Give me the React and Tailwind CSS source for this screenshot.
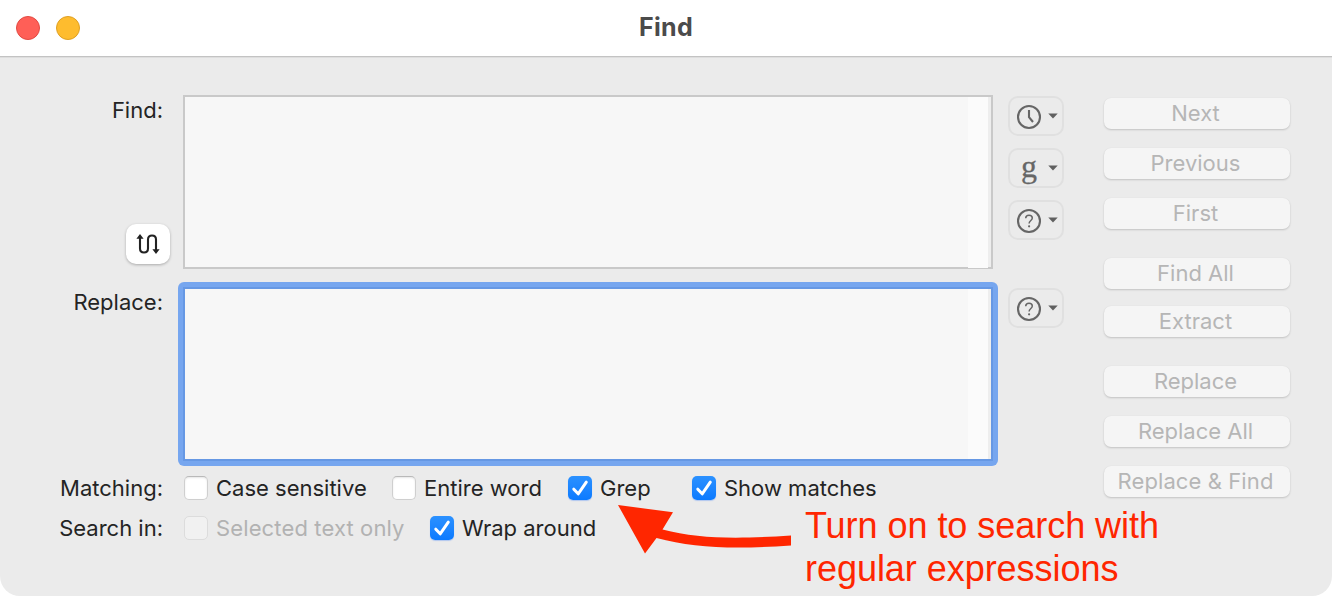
function Caret() {
  return (
    <svg width="10" height="6" viewBox="0 0 10 6" className="shrink-0">
      <path d="M0.3 0.4H9.7L5 5.6Z" fill="#606060" />
    </svg>
  );
}

function ClockIcon() {
  return (
    <svg width="26" height="26" viewBox="0 0 26 26" fill="none" stroke="#666" strokeWidth="2.1">
      <circle cx="13" cy="13" r="11" />
      <path d="M13 6V13.2L17 18" />
    </svg>
  );
}

function HelpIcon() {
  return (
    <svg width="26" height="26" viewBox="0 0 26 26" fill="none" stroke="#666" strokeWidth="2.1">
      <circle cx="13" cy="13" r="11" />
      <path d="M9.7 10.2C9.8 8.2 11.1 7.2 13 7.2C15 7.2 16.3 8.4 16.3 10C16.3 12.6 13.1 12.4 13.1 15.6" strokeWidth="1.5" />
      <circle cx="13.1" cy="18.3" r="1.1" fill="#666" stroke="none" />
    </svg>
  );
}

function Tool({ children, className = "" }) {
  return (
    <button className={`flex h-10 w-14 items-center rounded-[10px] border-2 border-[#e0e0e0] pl-[6px] ${className}`}>
      <span className="flex w-[26px] justify-center pt-px">{children}</span>
      <span className="ml-[6px] flex">
        <Caret />
      </span>
    </button>
  );
}

function Check({ on, disabled, label, className = "", text = "" }) {
  const box = on
    ? "bg-linear-to-b from-[#2b91ff] to-[#0a7aff] shadow-[0_1px_1px_rgba(0,90,255,0.25)]"
    : disabled
      ? "border border-[#dcdcdc] bg-[#f1f1f1]"
      : "border border-[#cfcfcf] border-t-[#b9b9b9] bg-white shadow-[inset_0_1px_2px_rgba(0,0,0,0.1)]";
  return (
    <label className={`flex h-10 items-center ${className}`}>
      <span className={`flex h-6 w-6 shrink-0 items-center justify-center rounded-[5px] ${box}`}>
        {on && (
          <svg width="24" height="24" viewBox="0 0 24 24" fill="none" stroke="#fff" strokeWidth="3" strokeLinecap="round" strokeLinejoin="round">
            <path d="M5.8 13.2L10.2 17.8L18.3 6.2" />
          </svg>
        )}
      </span>
      <span className={`ml-2 whitespace-nowrap ${disabled ? "text-[#b2b2b2]" : ""} ${text}`}>{label}</span>
    </label>
  );
}

function Action({ label, className = "", text = "" }) {
  return (
    <button className={`flex h-[31px] w-[186px] items-center justify-center rounded-[7px] bg-[#f5f5f5] text-[#b6b6b6] shadow-[0_1px_2px_rgba(0,0,0,0.17),0_0_1px_rgba(0,0,0,0.06)] ${className}`}>
      <span className={`mr-[3px] whitespace-nowrap pb-[2px] ${text}`}>{label}</span>
    </button>
  );
}

export default function App() {
  return (
    <div className="h-[596px] w-[1332px] overflow-hidden bg-white font-['Inter',sans-serif] text-[22px] leading-[28px] text-[#242424]">
      <div className="flex h-full flex-col overflow-hidden rounded-b-[20px] bg-[#ebebeb]">
        <header className="relative flex h-[58px] shrink-0 items-center gap-4 border-b border-[#dedede] bg-white pb-px pl-4 shadow-[inset_0_-1px_0_#c3c3c3]">
          <span className="h-6 w-6 rounded-full border border-[#e24a42] bg-[#ff5f57]" />
          <span className="h-6 w-6 rounded-full border border-[#dfa023] bg-[#febc2e]" />
          <h1 className="absolute inset-x-0 top-[13px] text-center text-[25px] font-bold tracking-[0.3px] text-[#4b4b4b]">Find</h1>
        </header>

        <main className="relative flex flex-1 pt-[37px]">
          <section className="w-[998px] shrink-0">
            <div className="flex h-[174px]">
              <div className="flex w-[183px] flex-col items-end">
                <span className="mr-[20px] mt-px">Find:</span>
                <button className="mr-[13px] mt-[100px] flex h-[40px] w-[44px] items-center justify-center rounded-[10px] bg-white shadow-[0_1px_3px_rgba(0,0,0,0.28)]">
                  <svg width="26" height="22" viewBox="0 0 26 22" fill="none" stroke="#222" strokeWidth="2.1">
                    <path d="M5 5V15.5C5 18 6.5 19.5 9 19.5C11.5 19.5 13 18 13 15.5V6.5C13 4 14.5 2.5 17 2.5C19.5 2.5 21 4 21 6.5V17" />
                    <path d="M1.4 5.8L5 1L8.6 5.8ZM17.4 16.2H24.6L21 21Z" fill="#222" stroke="none" />
                  </svg>
                </button>
              </div>
              <div className="flex w-[810px] border-2 border-[#c9c9c9] bg-[#f7f7f7]">
                <div className="ml-auto h-[171px] w-5 shrink-0 bg-[#fbfbfb]" />
                <div className="w-[3px] bg-[#eeeeee]" />
              </div>
            </div>

            <div className="mt-[13px] flex h-[184px]">
              <div className="flex w-[178px] justify-end pr-[15px] pt-[6px]">Replace:</div>
              <div className="w-[820px] rounded-[6px] bg-[#76a6ef] p-[5px]">
                <div className="flex h-full border-2 border-[#6698e4] bg-[#f7f7f7]">
                  <div className="ml-auto w-5 bg-[#fbfbfb]" />
                  <div className="w-[3px] bg-[#eeeeee]" />
                </div>
              </div>
            </div>

            <div className="mt-[2px] flex items-center">
              <span className="w-[163px] text-right">Matching:</span>
              <Check label="Case sensitive" className="ml-[21px] w-[208px]" />
              <Check label="Entire word" className="w-[176px]" />
              <Check on label="Grep" className="w-[124px]" />
              <Check on label="Show matches" />
            </div>
            <div className="flex items-center">
              <span className="w-[163px] text-right">Search in:</span>
              <Check disabled label="Selected text only" text="tracking-[0.13px]" className="ml-[21px] w-[246px]" />
              <Check on label="Wrap around" />
            </div>
          </section>

          <aside className="ml-[10px] flex w-14 flex-col gap-3 pt-px">
            <Tool><ClockIcon /></Tool>
            <Tool>
              <span className="-mt-[6px] font-['Liberation_Serif',serif] text-[32px] leading-[32px] text-[#666] [-webkit-text-stroke:0.3px_#666]">g</span>
            </Tool>
            <Tool><HelpIcon /></Tool>
            <Tool className="mt-9"><HelpIcon /></Tool>
          </aside>

          <aside className="ml-10 flex flex-col pt-[3px]">
            <Action label="Next" />
            <Action label="Previous" className="mt-[19px]" />
            <Action label="First" className="mt-[19px]" />
            <Action label="Find All" className="mt-[29px]" />
            <Action label="Extract" className="mt-[17px]" />
            <Action label="Replace" className="mt-[29px]" />
            <Action label="Replace All" className="mt-[19px]" />
            <Action label="Replace & Find" text="tracking-[0.1px]" className="mt-[19px]" />
          </aside>

          <svg width="176" height="54" viewBox="0 0 176 54" className="absolute left-[617px] top-[442px]">
            <path d="M1 5L56 12.3L45.500 29.500C82 39 120 39 174 35.500V45.500C116 49.500 77 48 39.500 38L28 53.500Z" fill="#ff2600" />
          </svg>
          <p className="absolute left-[805px] top-[446px] whitespace-nowrap font-['Liberation_Sans',sans-serif] text-[36px] leading-[43px] tracking-[-0.04px] text-[#ff2600]">
            Turn on to search with
            <br />
            regular expressions
          </p>
        </main>
      </div>
    </div>
  );
}
